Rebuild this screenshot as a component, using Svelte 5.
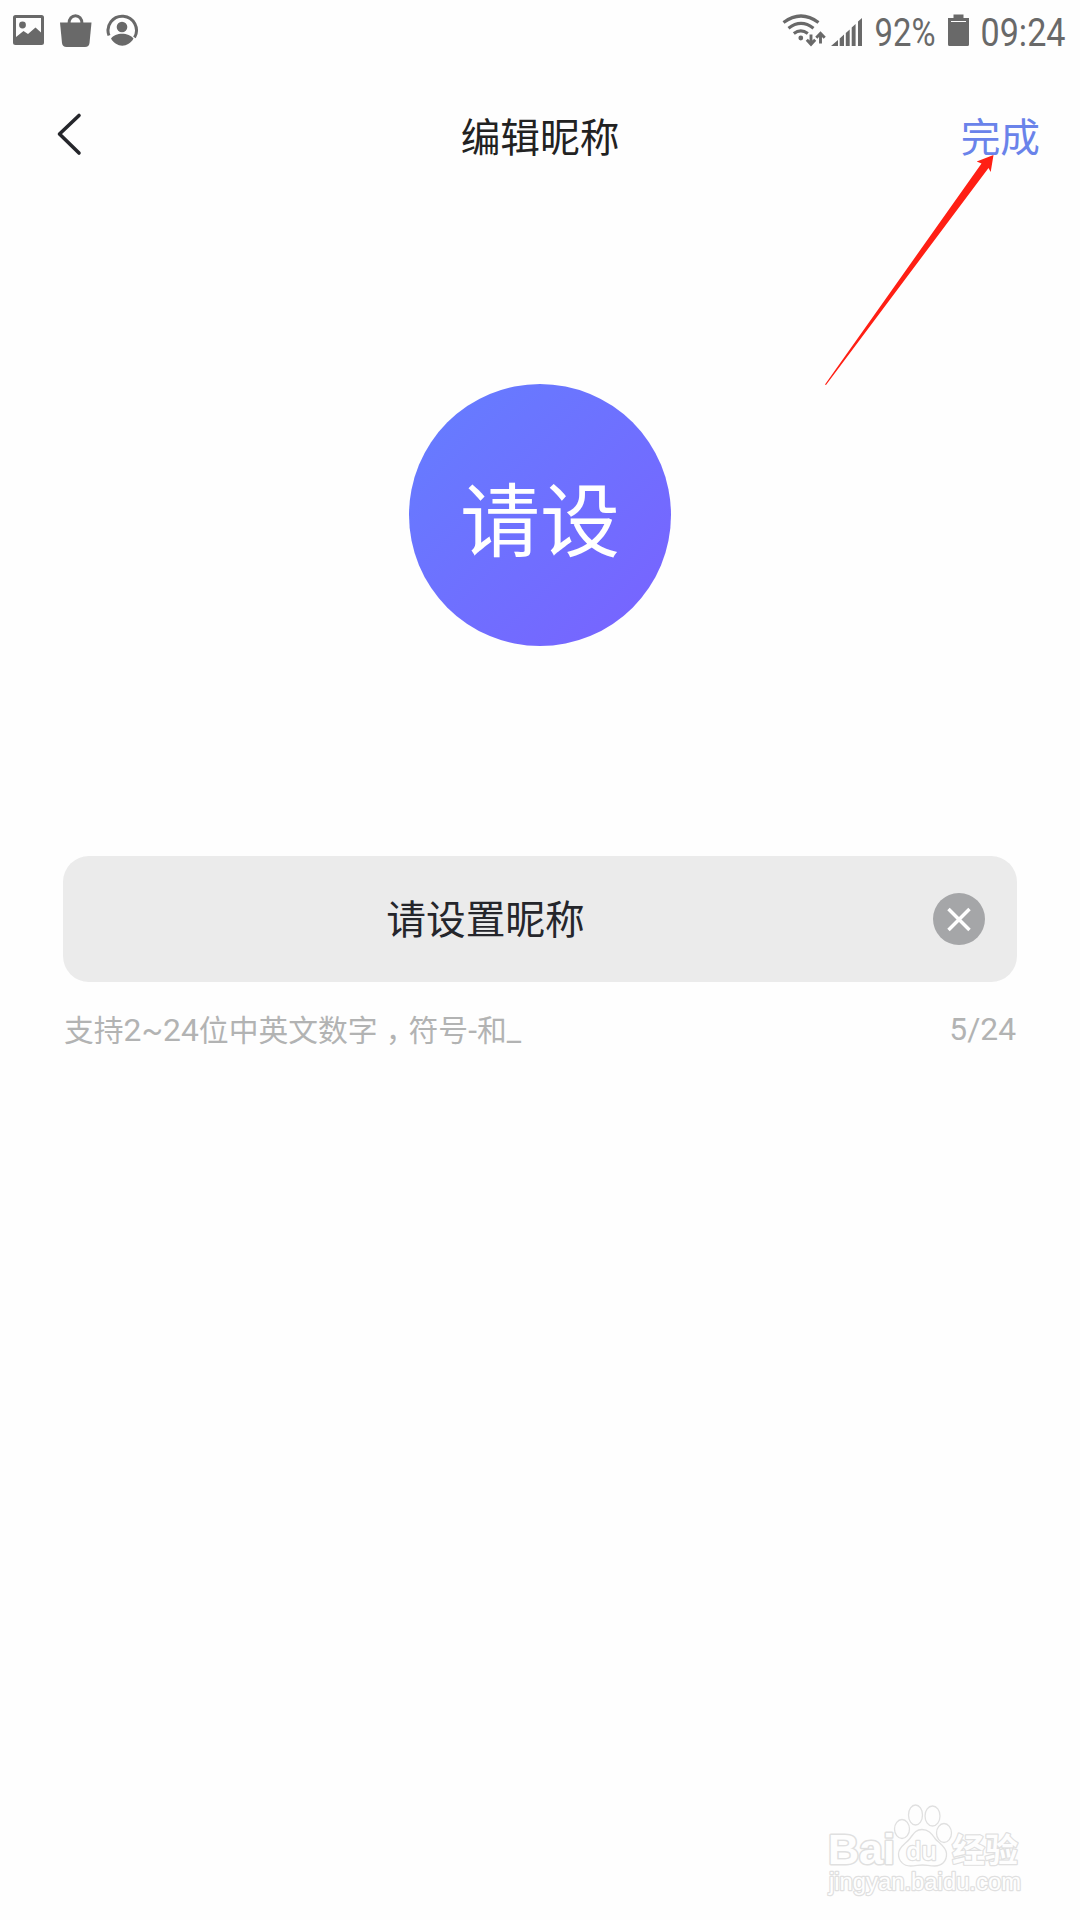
<script lang="ts">
	const maxLength = 24;

	let nickname = $state('请设置昵称');
	let initials = $derived(nickname.slice(0, 2));
</script>

<div class="page">
	<div class="status">
		<svg class="notifications" width="140" height="60" viewBox="0 0 140 60">
			<!-- picture -->
			<path
				fill-rule="evenodd"
				d="M15.5 15h26a2.5 2.5 0 0 1 2.5 2.5v25a2.5 2.5 0 0 1-2.5 2.5h-26a2.5 2.5 0 0 1-2.5-2.5v-25a2.5 2.5 0 0 1 2.5-2.5zM16 18v19l7.500-6 4.500 3 7.500-6.500 5.500 5V18z"
			/>
			<circle cx="22.500" cy="25" r="3.400" />
			<!-- bag -->
			<path d="M60 22.500h31.500l-2 20.500q-.4 4-4.500 4h-18.500q-4 0-4.500-4z" />
			<path class="line" d="M69 24c-.5-11 13.500-11 13 0" stroke-width="3" />
			<!-- person -->
			<path class="line" d="M109 35.500a14.200 14.200 0 1 1 25.500 2" stroke-width="3" />
			<circle cx="122" cy="27" r="5.300" />
			<path d="M111 38.500c4-6.500 18-6.500 22.500 0-5 9.500-17.500 9.500-22.500 0z" />
		</svg>

		<svg class="system" width="310" height="60" viewBox="770 0 310 60">
			<!-- wifi -->
			<g class="line" stroke-width="3.200">
				<path d="M783.500 22.500q17.500-13 35 0" />
				<path d="M788.500 28.200q12.500-9.500 25 0" />
				<path d="M793.800 33.500q7-5.200 14 0" />
			</g>
			<circle cx="800.800" cy="38" r="2.400" />
			<path class="line" stroke-width="2.900" d="M811 34.500v9.500M806.800 39.800l4.200 4.500 4.200-4.500M820.500 43.500v-9.500M816.300 37.800l4.200-4.500 4.200 4.500" />
			<!-- signal -->
			<path d="M831 46l7-6V46zM839.700 38.500l4.300-4V46h-4.300zM845.800 33l3.900-3.500V46h-3.900zM851.700 27.500l3.900-3.500V46h-3.900zM858 21.500l4-3.500v28h-4z" />
			<text x="874.500" y="45.500" textLength="61" lengthAdjust="spacingAndGlyphs">92%</text>
			<!-- battery -->
			<path d="M953.500 14.500h10V18h5.500v26.500q0 1.500-1.500 1.500h-18q-1.500 0-1.500-1.500V18h5.500z" />
			<path d="M951 21.500h15" stroke="#fff" stroke-width="1" />
			<text x="980.500" y="45.500" textLength="85" lengthAdjust="spacingAndGlyphs">09:24</text>
		</svg>
	</div>

	<header>
		<button class="back" aria-label="返回">
			<svg width="30" height="44" viewBox="0 0 30 44">
				<path d="M25 3.500L5.500 22 25 41" />
			</svg>
		</button>
		<h1>编辑昵称</h1>
		<button class="done">完成</button>
	</header>

	<div class="avatar"><span>{initials}</span></div>

	<div class="field">
		<input bind:value={nickname} maxlength={maxLength} />
		<button class="clear" aria-label="清除" onclick={() => (nickname = '')}>
			<svg width="52" height="52" viewBox="0 0 52 52">
				<circle cx="26" cy="26" r="26" />
				<path d="M15.500 16L36.500 37M36.500 16L15.500 37" />
			</svg>
		</button>
	</div>

	<div class="hint">
		<span>支持<b>2~24</b>位中英文数字<i>，</i>符号<b>-</b>和<b>_</b></span>
		<b class="count">{nickname.length}/{maxLength}</b>
	</div>

	<svg class="arrow" width="180" height="240" viewBox="820 150 180 240">
		<path d="M993.500 155L990.700 172 988.500 168 826 385 825 384.500 981.500 163.500 976.700 161.500z" />
	</svg>

	<svg class="watermark" width="230" height="120" viewBox="0 0 230 120">
		<text class="bai" x="18" y="74" font-size="42" textLength="67" lengthAdjust="spacingAndGlyphs">Bai</text>
		<ellipse cx="92" cy="39" rx="7.500" ry="9.500" />
		<ellipse cx="105.500" cy="25" rx="7" ry="10" />
		<ellipse cx="122.500" cy="26" rx="7.500" ry="10" />
		<ellipse cx="134" cy="43" rx="7.500" ry="9.500" />
		<path d="M112 39.500c7 0 10 5 13 9s11 8 11.500 15c.5 8-5 12.500-12 12.500-5 0-8-1-12-1s-7 1-12 1c-7 0-12-5-12-12 0-7 7-10 11-15s6-9.500 12.500-9.500z" />
		<text class="du" x="96" y="70" font-size="25" textLength="31" lengthAdjust="spacingAndGlyphs">du</text>
		<text class="cjk" x="142" y="72" font-size="33" textLength="66" lengthAdjust="spacingAndGlyphs">经验</text>
		<text class="url" x="19" y="100" font-size="23" textLength="192" lengthAdjust="spacingAndGlyphs">jingyan.baidu.com</text>
	</svg>
</div>

<style>
	:global(body) {
		background: #fefefe;
	}

	.page {
		position: relative;
		display: flex;
		flex-direction: column;
		width: 1080px;
		height: 1920px;
		overflow: hidden;
		background: #fefefe;
		font-family: Roboto, 'Noto Sans CJK SC', sans-serif;
	}

	button {
		padding: 0;
		border: 0;
		background: none;
		font: inherit;
	}

	svg {
		display: block;
	}

	.status {
		display: flex;
		justify-content: space-between;
		height: 60px;
		fill: #696969;
	}

	.status text {
		font-size: 39px;
	}

	.line {
		fill: none;
		stroke: #696969;
	}

	header {
		display: grid;
		grid-template-columns: 1fr auto 1fr;
		align-items: center;
		height: 152px;
		padding: 0 40px 0 54px;
		font-size: 39.7px;
		line-height: 60px;
	}

	.back {
		justify-self: start;
		margin-top: -5px;
	}

	.back path {
		fill: none;
		stroke: #25262b;
		stroke-width: 3.6;
		stroke-linecap: round;
		stroke-linejoin: round;
	}

	h1 {
		margin: 6px 0 0 -14px;
		color: #222;
		font-size: 39.7px;
		font-weight: 400;
	}

	.done {
		justify-self: end;
		margin-top: 6px;
		color: #6a83ea;
	}

	.avatar {
		display: flex;
		align-items: center;
		justify-content: center;
		align-self: center;
		box-sizing: border-box;
		width: 262px;
		height: 262px;
		margin-top: 172px;
		padding-top: 15px;
		border-radius: 50%;
		background: linear-gradient(135deg, #647eff, #7962ff);
		color: #fff;
		font-size: 80px;
		line-height: 1;
	}

	.field {
		display: flex;
		align-items: center;
		box-sizing: border-box;
		width: 954px;
		height: 126px;
		margin: 210px 63px 0;
		padding: 0 32px 0 40px;
		border-radius: 26px;
		background: #ebebeb;
	}

	input {
		flex: 1;
		min-width: 0;
		padding: 3px 0 0;
		border: 0;
		outline: 0;
		background: none;
		color: #25262b;
		font: 39.7px/60px Roboto, 'Noto Sans CJK SC', sans-serif;
		text-align: center;
	}

	.clear {
		margin-left: 65px;
	}

	.clear circle {
		fill: #a5a6a8;
	}

	.clear path {
		stroke: #fff;
		stroke-width: 3.5;
	}

	.hint {
		display: flex;
		justify-content: space-between;
		margin: 25px 64px 0;
		color: #b2b3b3;
		font-size: 29.8px;
		line-height: 46px;
	}

	.hint b {
		font-size: 31.8px;
		font-weight: 400;
	}

	.hint .count {
		margin-top: -1px;
	}

	/* half-width comma, centred in a full-width cell */
	.hint i {
		margin: 0 6px 0 10px;
		font-style: normal;
		font-feature-settings: 'palt';
	}

	.arrow {
		position: absolute;
		left: 820px;
		top: 150px;
		fill: #ff1f14;
	}

	.watermark {
		position: absolute;
		left: 810px;
		top: 1790px;
		fill: #fefefe;
		stroke: #e0e0e0;
		stroke-width: 1.3;
		font-family: 'Open Sans', sans-serif;
	}

	.watermark text {
		paint-order: stroke;
		stroke-width: 2.4;
		stroke-linejoin: round;
	}

	.watermark .bai {
		font-family: 'Liberation Sans', sans-serif;
		font-weight: 700;
		stroke-width: 3;
	}

	.watermark .du {
		font-weight: 600;
	}

	.watermark .cjk {
		font-family: 'Noto Sans CJK SC', sans-serif;
		font-weight: 700;
	}

	.watermark .url {
		font-family: 'Liberation Sans', sans-serif;
	}
</style>
